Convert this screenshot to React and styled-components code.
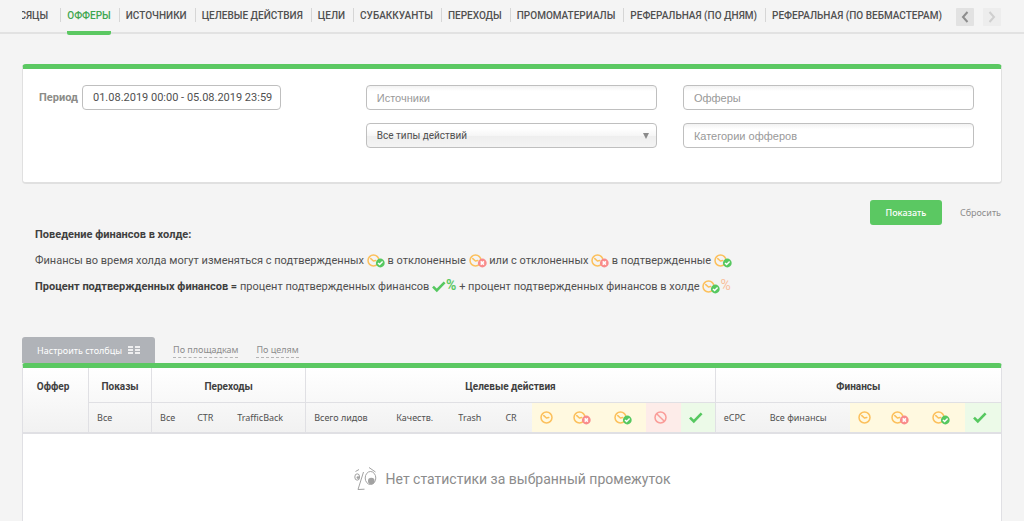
import React from 'react'
import styled, { createGlobalStyle } from 'styled-components'

const GlobalStyle = createGlobalStyle`
  * { box-sizing: border-box; }
  html, body, #root { height: 100%; }
  body {
    margin: 0;
    background: #f4f4f4;
    color: #505050;
    font-family: Roboto, "Noto Sans", sans-serif;
    font-size: 11px;
  }
  button, input, select { font-family: inherit; margin: 0; }
`
const smallText = `
  font-family: "Noto Sans", sans-serif;
  font-size: 9px;
`
const Page = styled.div`
  min-height: 100%;
  display: flex;
  flex-direction: column;
`
const TopBar = styled.header`
  display: flex;
  align-items: flex-start;
  height: 34px;
  padding: 0 23px 0 22px;
  border-bottom: 2px solid #e2e2e2;
`
const Tabs = styled.nav`
  flex: 1;
  min-width: 0;
  height: 35px;
  display: flex;
  justify-content: flex-end;
  overflow: hidden;
`
const TabItem = styled.div`
  flex: none;
  height: 35px;
  padding: 0 8px 0 7px;
  background: linear-gradient(#d6d6d6, #d6d6d6) no-repeat 0 8px / 1px 14px;
  &:first-child { padding-right: 12px; }
  &:last-child { padding-right: 0; }
`
const TabLink = styled.a`
  display: block;
  height: 35px;
  line-height: 31px;
  font-size: 10px;
  font-weight: 500;
  white-space: nowrap;
  text-decoration: none;
  text-transform: uppercase;
  color: ${p => p.$active ? '#3fa650' : '#505050'};
  background: ${p => p.$active ? 'linear-gradient(#5bc862, #5bc862) no-repeat 0 100% / 100% 4px' : 'none'};
  border-radius: 2px;
`
const Arrows = styled.div`
  display: flex;
  gap: 9px;
  padding: 8px 0 0 14px;
`
const ArrowButton = styled.button`
  display: flex;
  align-items: center;
  justify-content: center;
  width: 18px;
  height: 18px;
  padding: 0;
  border: 0;
  border-radius: 1px;
  background: ${p => p.disabled ? '#ededed' : '#e2e2e2'};
  color: ${p => p.disabled ? '#cfcfcf' : '#8d8d8d'};
`
const Content = styled.main`
  flex: 1;
  display: flex;
  flex-direction: column;
  padding: 30px 22px 0;
`
const Filters = styled.form`
  display: flex;
  flex-direction: column;
`
const FilterPanel = styled.div`
  display: grid;
  grid-template-columns: 31fr 30fr 30fr;
  column-gap: 26px;
  padding: 16px 27px 34px 16px;
  background: #fff;
  border: 1px solid #e0e0e0;
  border-top: 5px solid #5bc862;
  border-bottom-width: 2px;
  border-radius: 4px;
`
const PeriodField = styled.div`
  display: flex;
  align-items: center;
  align-self: start;
  gap: 3px;
`
const PeriodLabel = styled.label`
  width: 40px;
  font-size: 11px;
  font-weight: 700;
  color: #8c8c88;
`
const FieldColumn = styled.div`
  display: flex;
  flex-direction: column;
  gap: 13px;
  min-width: 0;
`
const Input = styled.input`
  width: 100%;
  height: 25px;
  padding: 0 4px 0 10px;
  border: 1px solid #bfbfbf;
  border-radius: 4px;
  background: #fff linear-gradient(#f2f2f2, #fff 5px);
  font-family: "Liberation Sans", Arial, sans-serif;
  font-size: 11px;
  color: #505050;
  &::placeholder { color: #999; opacity: 1; }
`
const PeriodInput = styled(Input)`
  max-width: 199px;
  background: #fff;
  font-family: Roboto, sans-serif;
`
const SelectWrap = styled.div`
  display: grid;
  align-items: center;
`
const Select = styled.select`
  grid-area: 1 / 1;
  appearance: none;
  width: 100%;
  height: 25px;
  padding: 0 10px;
  border: 1px solid #bfbfbf;
  border-radius: 4px;
  background: linear-gradient(#fff 20%, #f6f6f6 50%, #eee 52%, #f4f4f4 100%);
  font-size: 10px;
  color: #505050;
`
const Caret = styled.svg`
  grid-area: 1 / 1;
  justify-self: end;
  margin-right: 8px;
  pointer-events: none;
`
const FormActions = styled.div`
  display: flex;
  justify-content: flex-end;
  gap: 18px;
  padding: 16px 1px 0 0;
`
const SubmitButton = styled.button`
  width: 72px;
  height: 25px;
  padding: 0;
  border: 0;
  border-radius: 3px;
  background: #5bc862;
  color: #fff;
  ${smallText}
  font-weight: 500;
`
const ResetButton = styled.button`
  height: 25px;
  padding: 0;
  border: 0;
  background: none;
  color: #8c8c8c;
  ${smallText}
`
const Notes = styled.section`
  display: flex;
  flex-direction: column;
  gap: 8px;
  padding: 1px 13px 0;
`
const Note = styled.p`
  height: 18px;
  margin: 0;
  line-height: 18px;
  white-space: nowrap;
  b { font-weight: 700; color: #404040; }
  svg { vertical-align: -4px; }
`
const Percent = styled.span`
  font-weight: ${p => p.$light ? 400 : 700};
  font-size: 14px;
  line-height: 1;
  color: ${p => p.$light ? '#f9bf9b' : '#5bc862'};
`
const ViewBar = styled.div`
  display: flex;
  align-items: flex-start;
  gap: 18px;
  padding-top: 41px;
`
const ColumnsButton = styled.button`
  display: flex;
  align-items: center;
  gap: 6px;
  height: 26px;
  padding: 0 15px;
  border: 0;
  border-radius: 3px 3px 0 0;
  background: #b0b3b8;
  color: #fff;
  ${smallText}
`
const ViewLink = styled.a`
  margin-top: 6px;
  line-height: 14px;
  ${smallText}
  color: #8c8c8c;
  text-decoration: none;
  border-bottom: 1px dashed #b5b5b5;
`
const Report = styled.section`
  flex: 1;
  background: #fff;
  border: 1px solid #e0e0e4;
  border-top: 5px solid #5bc862;
  border-bottom: 0;
  border-radius: 3px 3px 0 0;
`
const Table = styled.table`
  width: 100%;
  table-layout: fixed;
  border-collapse: separate;
  border-spacing: 0;
  thead { background: linear-gradient(#fff, #f1f1f1); }
`
const GroupHead = styled.th`
  height: 35px;
  padding: 2px 0 0;
  font-size: 10px;
  font-weight: 700;
  color: #404040;
  border-left: 1px solid #e0e0e4;
  border-bottom: 1px solid #e0e0e4;
`
const OfferHead = styled(GroupHead)`
  padding: 13px 5px 0 0;
  vertical-align: top;
  border-left: 0;
  border-bottom-width: 2px;
`
const tones = { wait: '#fff9e0', declined: '#fdece9', approved: '#ecfae8' }
const SubHead = styled.th`
  height: 31px;
  padding: 0 0 0 8px;
  text-align: left;
  white-space: nowrap;
  ${smallText}
  font-weight: 400;
  border-left: ${p => p.$first ? '1px solid #e0e0e4' : '0'};
  border-bottom: 2px solid #e0e0e4;
  background: ${p => tones[p.$tone] || 'transparent'};
  svg { display: block; }
`
const EmptyCell = styled.td`
  padding: 31px 0;
`
const EmptyMessage = styled.div`
  display: flex;
  align-items: center;
  justify-content: center;
  gap: 9px;
  font-size: 14px;
  line-height: 28px;
  color: #8c8c8c;
`

const Clock = () => (
  <g fill="none" stroke="#fcc05c" strokeWidth="1.5" strokeLinecap="round" strokeLinejoin="round">
    <circle cx="6.5" cy="6.5" r="5.5" />
    <path d="M3.8 4.6 6.4 7 8.8 6.4" />
  </g>
)
const WaitIcon = () => (
  <svg width="13" height="14" viewBox="0 0 13 14" role="img" aria-label="В холде"><Clock /></svg>
)
const WaitDeclinedIcon = () => (
  <svg width="18" height="14" viewBox="0 0 18 14" role="img" aria-label="Холд, отклонено">
    <Clock />
    <circle cx="13.3" cy="9" r="4.4" fill="#f98b8b" />
    <path d="m11.7 7.4 3.2 3.2m0-3.2-3.2 3.2" stroke="#fff" strokeWidth="1.5" />
  </svg>
)
const WaitApprovedIcon = () => (
  <svg width="18" height="14" viewBox="0 0 18 14" role="img" aria-label="Холд, подтверждено">
    <Clock />
    <circle cx="13.3" cy="9" r="4.4" fill="#56c860" />
    <path d="m11 9 1.6 1.6 3-3.2" fill="none" stroke="#fff" strokeWidth="1.4" />
  </svg>
)
const DeclinedIcon = () => (
  <svg width="13" height="14" viewBox="0 0 13 14" role="img" aria-label="Отклонено">
    <g fill="none" stroke="#fa9c98" strokeWidth="1.5">
      <circle cx="6.5" cy="6.5" r="5.5" />
      <path d="m2.7 2.7 7.6 7.6" />
    </g>
  </svg>
)
const ApprovedIcon = () => (
  <svg width="14" height="14" viewBox="0 0 14 14" role="img" aria-label="Подтверждено">
    <path d="m1 6.6 3.8 3.9 7.8-8.2" fill="none" stroke="#56c860" strokeWidth="2.6" />
  </svg>
)
const ColumnsIcon = () => (
  <svg width="12" height="8" viewBox="0 0 12 8" aria-hidden="true">
    <path d="M0 1h5M0 4h5M0 7h5M7 1h5M7 4h5M7 7h5" stroke="#fff" strokeWidth="2" opacity=".8" />
  </svg>
)
const FaceIcon = () => (
  <svg width="23" height="26" viewBox="0 0 23 26" fill="none" stroke="#a2a2a2" strokeWidth="1" aria-hidden="true">
    <ellipse cx="3.2" cy="11" rx="2.4" ry="3.2" />
    <circle cx="4" cy="11.6" r="1.4" fill="#a2a2a2" stroke="none" />
    <path d="M1.5 5.5 5 3.5M15 1.5l6.5 4.5M9.5 6 4 23.5l6.5-.3" />
    <ellipse cx="16.5" cy="12" rx="5.3" ry="6.5" />
    <circle cx="17.3" cy="15" r="3.3" fill="#a2a2a2" stroke="none" />
  </svg>
)

const navItems = [
  'Месяцы', 'Офферы', 'Источники', 'Целевые действия', 'Цели', 'Субаккуанты',
  'Переходы', 'Промоматериалы', 'Реферальная (по дням)', 'Реферальная (по вебмастерам)'
]
const groups = [
  { title: 'Показы', span: 1 },
  { title: 'Переходы', span: 3 },
  { title: 'Целевые действия', span: 9 },
  { title: 'Финансы', span: 6 }
]
const columns = [
  { width: 63, label: 'Все', first: true },
  { width: 38, label: 'Все', first: true },
  { width: 40, label: 'CTR' },
  { width: 76, label: 'TrafficBack' },
  { width: 83, label: 'Всего лидов', first: true },
  { width: 62, label: 'Качеств.' },
  { width: 47, label: 'Trash' },
  { width: 35, label: 'CR' },
  { width: 33, label: <WaitIcon />, tone: 'wait' },
  { width: 41, label: <WaitDeclinedIcon />, tone: 'wait' },
  { width: 40, label: <WaitApprovedIcon />, tone: 'wait' },
  { width: 34, label: <DeclinedIcon />, tone: 'declined' },
  { width: 34, label: <ApprovedIcon />, tone: 'approved' },
  { width: 47, label: 'eCPC', first: true },
  { width: 88, label: 'Все финансы' },
  { width: 33, label: <WaitIcon />, tone: 'wait' },
  { width: 41, label: <WaitDeclinedIcon />, tone: 'wait' },
  { width: 41, label: <WaitApprovedIcon />, tone: 'wait' },
  { width: 36, label: <ApprovedIcon />, tone: 'approved' }
]

const App = () => {
  return (
    <Page>
      <GlobalStyle />
      <TopBar>
        <Tabs>
          {navItems.map(name => (
            <TabItem key={name}>
              <TabLink href="#" $active={name === 'Офферы'}>{name}</TabLink>
            </TabItem>
          ))}
        </Tabs>
        <Arrows>
          <ArrowButton type="button" aria-label="Назад">
            <svg width="8" height="12" viewBox="0 0 8 12" fill="none" stroke="currentColor" strokeWidth="2"><path d="M6.5 1 2 6l4.5 5" /></svg>
          </ArrowButton>
          <ArrowButton type="button" aria-label="Вперёд" disabled>
            <svg width="8" height="12" viewBox="0 0 8 12" fill="none" stroke="currentColor" strokeWidth="2"><path d="M1.5 1 6 6l-4.5 5" /></svg>
          </ArrowButton>
        </Arrows>
      </TopBar>
      <Content>
        <Filters>
          <FilterPanel>
            <PeriodField>
              <PeriodLabel htmlFor="period">Период</PeriodLabel>
              <PeriodInput id="period" defaultValue="01.08.2019 00:00 - 05.08.2019 23:59" />
            </PeriodField>
            <FieldColumn>
              <Input placeholder="Источники" aria-label="Источники" />
              <SelectWrap>
                <Select aria-label="Типы действий">
                  <option>Все типы действий</option>
                </Select>
                <Caret width="6" height="6" viewBox="0 0 6 6"><path d="M0 0h6L3 6z" fill="#8a8a8a" /></Caret>
              </SelectWrap>
            </FieldColumn>
            <FieldColumn>
              <Input placeholder="Офферы" aria-label="Офферы" />
              <Input placeholder="Категории офферов" aria-label="Категории офферов" />
            </FieldColumn>
          </FilterPanel>
          <FormActions>
            <SubmitButton type="submit">Показать</SubmitButton>
            <ResetButton type="reset">Сбросить</ResetButton>
          </FormActions>
        </Filters>
        <Notes>
          <Note><b>Поведение финансов в холде:</b></Note>
          <Note>
            Финансы во время холда могут изменяться с подтвержденных <WaitApprovedIcon /> в отклоненные <WaitDeclinedIcon /> или с отклоненных <WaitDeclinedIcon /> в подтвержденные <WaitApprovedIcon />
          </Note>
          <Note>
            <b>Процент подтвержденных финансов =</b> процент подтвержденных финансов <ApprovedIcon /><Percent>%</Percent> + процент подтвержденных финансов в холде <WaitApprovedIcon /><Percent $light>%</Percent>
          </Note>
        </Notes>
        <ViewBar>
          <ColumnsButton type="button">Настроить столбцы <ColumnsIcon /></ColumnsButton>
          <ViewLink href="#">По площадкам</ViewLink>
          <ViewLink href="#">По целям</ViewLink>
        </ViewBar>
        <Report>
          <Table>
            <colgroup>
              <col width={65} />
              {columns.map((c, i) => <col key={i} width={c.width} />)}
            </colgroup>
            <thead>
              <tr>
                <OfferHead rowSpan={2}>Оффер</OfferHead>
                {groups.map(g => <GroupHead key={g.title} colSpan={g.span}>{g.title}</GroupHead>)}
              </tr>
              <tr>
                {columns.map((c, i) => (
                  <SubHead key={i} $first={c.first} $tone={c.tone}>{c.label}</SubHead>
                ))}
              </tr>
            </thead>
            <tbody>
              <tr>
                <EmptyCell colSpan={20}>
                  <EmptyMessage><FaceIcon />Нет статистики за выбранный промежуток</EmptyMessage>
                </EmptyCell>
              </tr>
            </tbody>
          </Table>
        </Report>
      </Content>
    </Page>
  )
}

export default App
